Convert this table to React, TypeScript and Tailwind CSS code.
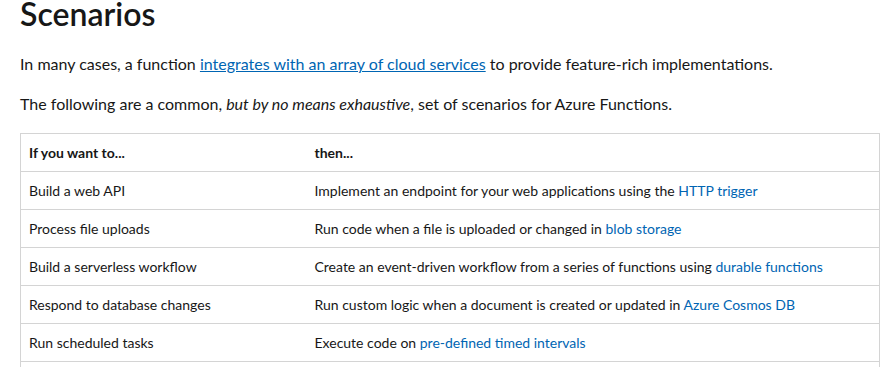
import React from "react";

const link = "text-[#0065b3]";

const rows: { a: string; pre: string; link: string }[] = [
  { a: "Build a web API", pre: "Implement an endpoint for your web applications using the ", link: "HTTP trigger" },
  { a: "Process file uploads", pre: "Run code when a file is uploaded or changed in ", link: "blob storage" },
  { a: "Build a serverless workflow", pre: "Create an event-driven workflow from a series of functions using ", link: "durable functions" },
  { a: "Respond to database changes", pre: "Run custom logic when a document is created or updated in ", link: "Azure Cosmos DB" },
  { a: "Run scheduled tasks", pre: "Execute code on ", link: "pre-defined timed intervals" },
];

export default function App() {
  return (
    <div
      className="bg-white text-[#171717] w-[886px] h-[367px] overflow-hidden px-5"
      style={{ fontFamily: "Lato, 'Liberation Sans', sans-serif" }}
    >
      <h1 className="text-[32px] font-semibold leading-[28px]">Scenarios</h1>
      <p className="text-[16px] leading-[24px] mt-[24px]">
        In many cases, a function{" "}
        <a className={`${link} underline`}>integrates with an array of cloud services</a> to provide
        feature-rich implementations.
      </p>
      <p className="text-[16px] leading-[24px] mt-[16px]">
        The following are a common, <em>but by no means exhaustive</em>, set of scenarios for Azure Functions.
      </p>
      <table className="mt-[17px] w-[860px] border-collapse border border-[#d4d4d4] text-[14px]">
        <thead>
          <tr className="border-b border-[#d4d4d4]">
            <th className="w-[286px] text-left font-bold px-2 py-2 leading-[21px]">If you want to...</th>
            <th className="text-left font-bold px-2 py-2 leading-[21px]">then...</th>
          </tr>
        </thead>
        <tbody>
          {rows.map((r) => (
            <tr key={r.a} className="border-b border-[#d4d4d4]">
              <td className="px-2 py-2 leading-[21px]">{r.a}</td>
              <td className="px-2 py-2 leading-[21px]">
                {r.pre}
                <a className={link}>{r.link}</a>
              </td>
            </tr>
          ))}
          <tr className="border-b border-[#d4d4d4]">
            <td className="px-2 py-2 leading-[21px]">&nbsp;</td>
            <td className="px-2 py-2 leading-[21px]">&nbsp;</td>
          </tr>
        </tbody>
      </table>
    </div>
  );
}
